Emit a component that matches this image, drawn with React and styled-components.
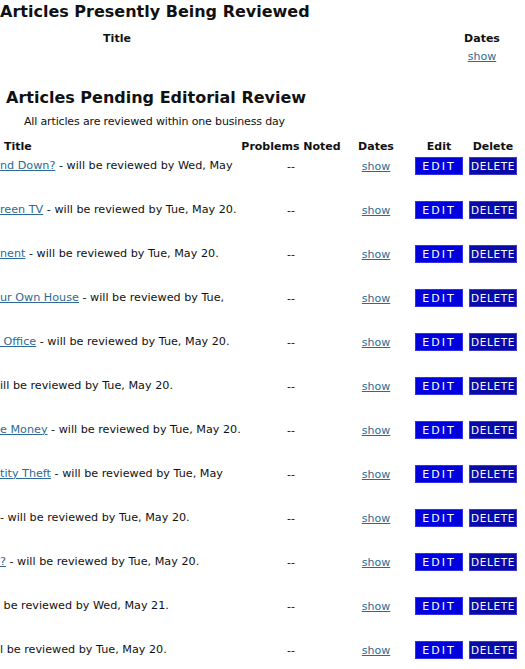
import React from 'react';
import styled, { createGlobalStyle } from 'styled-components';

const GlobalStyle = createGlobalStyle`
	body {
		margin: 0;
		background: #ffffff;
		font-family: 'DejaVu Sans', Tahoma, sans-serif;
		color: #111111;
	}
`;

const pending = [
	{ link: 'nd Down?', rest: ' - will be reviewed by Wed, May' },
	{ link: 'reen TV', rest: ' - will be reviewed by Tue, May 20.' },
	{ link: 'nent', rest: ' - will be reviewed by Tue, May 20.' },
	{ link: 'ur Own House', rest: ' - will be reviewed by Tue,' },
	{ link: ' Office', rest: ' - will be reviewed by Tue, May 20.' },
	{ link: '', rest: 'ill be reviewed by Tue, May 20.' },
	{ link: 'e Money', rest: ' - will be reviewed by Tue, May 20.' },
	{ link: 'tity Theft', rest: ' - will be reviewed by Tue, May' },
	{ link: '', rest: '- will be reviewed by Tue, May 20.' },
	{ link: '?', rest: ' - will be reviewed by Tue, May 20.' },
	{ link: '', rest: ' be reviewed by Wed, May 21.' },
	{ link: '', rest: 'l be reviewed by Tue, May 20.' },
];

const App = () => {
	return (
		<Page>
			<GlobalStyle />
			<Heading>Articles Presently Being Reviewed</Heading>
			<CurrentTable>
				<HeadCell>Title</HeadCell>
				<span />
				<HeadCell>Dates</HeadCell>
				<span />
				<span />
				<Cell>
					<Link href="#">show</Link>
				</Cell>
			</CurrentTable>

			<Heading indent>Articles Pending Editorial Review</Heading>
			<Note>All articles are reviewed within one business day</Note>

			<ReviewTable>
				<HeadRow>
					<HeadCell left>Title</HeadCell>
					<HeadCell>Problems Noted</HeadCell>
					<HeadCell>Dates</HeadCell>
					<HeadCell>Edit</HeadCell>
					<HeadCell>Delete</HeadCell>
				</HeadRow>
				{pending.map((row, i) => (
					<Row key={i}>
						<TitleCell>
							{row.link && <Link href="#">{row.link}</Link>}
							{row.rest}
						</TitleCell>
						<Cell>--</Cell>
						<Cell>
							<Link href="#">show</Link>
						</Cell>
						<Cell>
							<Button>EDIT</Button>
						</Cell>
						<Cell>
							<Button dark>DELETE</Button>
						</Cell>
					</Row>
				))}
			</ReviewTable>
		</Page>
	);
};

const Page = styled.div`
	width: 525px;
	height: 669px;
	overflow: hidden;
	font-size: 11px;
`;

const Heading = styled.h2`
	margin: ${(props) => (props.indent ? '20px 0 0' : '0')};
	padding-top: 1px;
	padding-left: ${(props) => (props.indent ? '6px' : '0')};
	font-size: 16px;
	line-height: 22px;
	font-weight: bold;
	white-space: nowrap;
`;

const CurrentTable = styled.div`
	display: grid;
	grid-template-columns: 234px 1fr 56px;
	width: 510px;
	margin-top: 8px;
	line-height: 15px;
`;

const HeadCell = styled.div`
	font-weight: bold;
	text-align: ${(props) => (props.left ? 'left' : 'center')};
	padding-left: ${(props) => (props.left ? '4px' : '0')};
	white-space: nowrap;
`;

const Cell = styled.div`
	display: flex;
	align-items: center;
	justify-content: center;
	height: 20px;
`;

const Link = styled.a`
	color: #2d6a93;
	text-decoration: underline;
	white-space: pre;
`;

const Note = styled.div`
	margin-top: 5px;
	padding-left: 24px;
	line-height: 15px;
	letter-spacing: -0.15px;
	white-space: nowrap;
`;

const ReviewTable = styled.div`
	margin-top: 10px;
`;

const columns = `240px 102px 68px 58px 50px`;

const HeadRow = styled.div`
	display: grid;
	grid-template-columns: ${columns};
	line-height: 15px;
	margin-bottom: 2px;
`;

const Row = styled.div`
	display: grid;
	grid-template-columns: ${columns};
	align-items: start;
	height: 44px;
`;

const TitleCell = styled.div`
	display: flex;
	align-items: center;
	height: 18px;
	font-size: 11.2px;
	white-space: pre;
`;

const Button = styled.button`
	width: 48px;
	height: 18px;
	padding: 0;
	border: 1px solid ${(props) => (props.dark ? '#3a3ad0' : '#3030f0')};
	background: ${(props) => (props.dark ? '#0a0aa8' : '#0000dc')};
	color: #ffffff;
	font-family: 'DejaVu Sans', Tahoma, sans-serif;
	font-size: ${(props) => (props.dark ? '10.5px' : '11px')};
	letter-spacing: ${(props) => (props.dark ? '0.6px' : '2px')};
	cursor: pointer;
`;

export default App;
